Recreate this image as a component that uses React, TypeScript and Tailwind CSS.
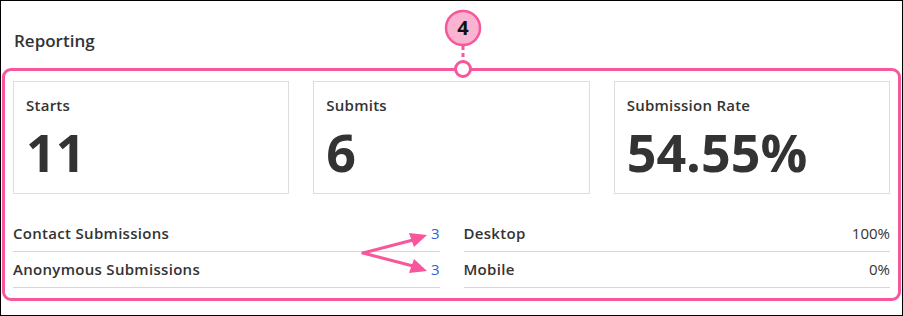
import React from "react";

const PINK = "#f7579b";

const cards = [
  { label: "Starts", value: "11" },
  { label: "Submits", value: "6" },
  { label: "Submission Rate", value: "54.55%" },
];

const leftRows = [
  { label: "Contact Submissions", value: "3" },
  { label: "Anonymous Submissions", value: "3" },
];

const rightRows = [
  { label: "Desktop", value: "100%" },
  { label: "Mobile", value: "0%" },
];

function StatCard({ label, value }: { label: string; value: string }) {
  return (
    <div className="h-[113px] border border-[#dedede] px-[12px] pt-[13px]">
      <div className="text-[15px] leading-[20px] font-semibold tracking-[0.25px] text-[#333]">{label}</div>
      <div className="mt-[11px] text-[52px] leading-[52px] font-bold text-[#333]">{value}</div>
    </div>
  );
}

function Row({ label, value, link }: { label: string; value: string; link?: boolean }) {
  return (
    <div className="flex items-center justify-between border-b border-[#d6d6d6] pt-[7px] pb-[8px] text-[15px] leading-[20px]">
      <span className="font-semibold tracking-[0.3px] text-[#333]">{label}</span>
      <span className={link ? "text-[#2a5fd8]" : "text-[#333]"}>{value}</span>
    </div>
  );
}

// callout badge + arrows drawn over the panel
function Annotations() {
  return (
    <svg className="pointer-events-none absolute left-0 top-0" width="903" height="316" viewBox="0 0 903 316">
      <line x1="462" y1="45" x2="462" y2="60" stroke={PINK} strokeWidth="3" strokeDasharray="4 3" />
      <circle cx="462" cy="27" r="17" fill="#fbb3d2" stroke={PINK} strokeWidth="2.5" />
      <text x="462" y="34" textAnchor="middle" fontSize="20" fontWeight="700" fill="#111" fontFamily="'Open Sans', sans-serif">
        4
      </text>
      <circle cx="462" cy="68" r="7.5" fill="#fff" stroke={PINK} strokeWidth="3" />
      <g stroke={PINK} strokeWidth="3" strokeLinecap="round">
        <line x1="362" y1="252" x2="412" y2="239" />
        <line x1="362" y1="252" x2="412" y2="265" />
      </g>
      <polygon points="426,234 408,232 413,246" fill={PINK} />
      <polygon points="426,270 413,258 408,272" fill={PINK} />
    </svg>
  );
}

export default function App() {
  return (
    <div
      className="relative h-[316px] w-[903px] overflow-hidden border border-black bg-white"
      style={{ fontFamily: "'Open Sans', 'Liberation Sans', sans-serif" }}
    >
      <h2 className="pl-[13px] pt-[28px] text-[17px] leading-[24px] font-semibold text-[#333]">Reporting</h2>
      <div className="mx-[1px] mt-[15px] rounded-[9px] border-[3px] border-[#f7579b] px-[8px] pt-[10px] pb-[10px]">
        <div className="grid grid-cols-3 gap-[24px]">
          {cards.map(c => (
            <StatCard key={c.label} label={c.label} value={c.value} />
          ))}
        </div>
        <div className="mt-[22px] grid grid-cols-2 gap-x-[24px]">
          <div>
            {leftRows.map(r => (
              <Row key={r.label} label={r.label} value={r.value} link />
            ))}
          </div>
          <div>
            {rightRows.map(r => (
              <Row key={r.label} label={r.label} value={r.value} />
            ))}
          </div>
        </div>
      </div>
      <Annotations />
    </div>
  );
}
